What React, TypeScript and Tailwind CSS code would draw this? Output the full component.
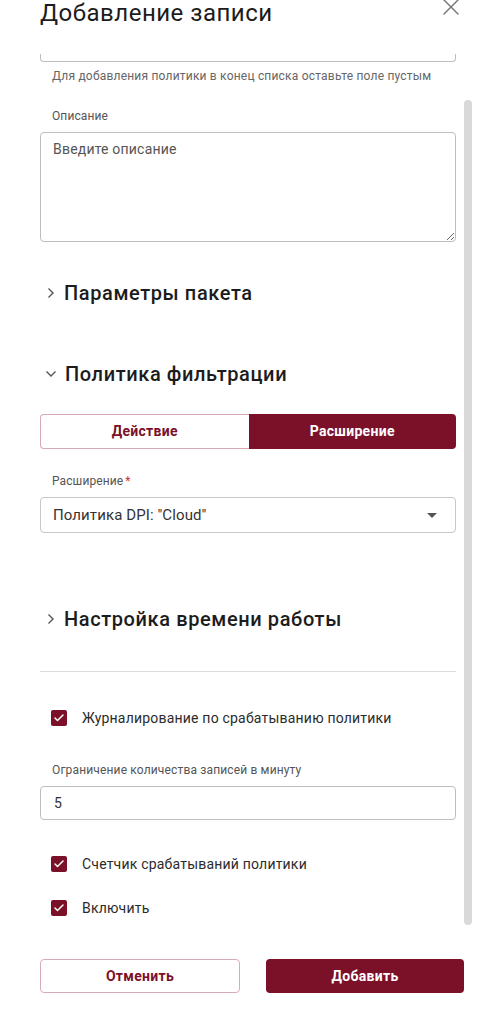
import { Check, X } from 'lucide-react';

const maroon = 'bg-[#7a1129]';

function Chevron({ open }: { open?: boolean }) {
  return open ? (
    <svg width="12" height="8" viewBox="0 0 12 8" className="ml-[5px] mr-[8px]">
      <polyline points="1.5,1.5 6,6 10.5,1.5" fill="none" stroke="#555" strokeWidth="1.4" />
    </svg>
  ) : (
    <svg width="8" height="12" viewBox="0 0 8 12" className="ml-[7px] mr-[9px]">
      <polyline points="1.5,1.5 6,6 1.5,10.5" fill="none" stroke="#555" strokeWidth="1.4" />
    </svg>
  );
}

function Section({ title, open }: { title: string; open?: boolean }) {
  return (
    <div className="flex h-[28px] items-center">
      <Chevron open={open} />
      <span className="text-[20px] leading-[28px] font-medium tracking-[0.6px] text-[#1c1c1c]">{title}</span>
    </div>
  );
}

function Box({ label }: { label: string }) {
  return (
    <div className="flex h-[20px] items-center">
      <span className={`ml-[11px] flex h-[16px] w-[16px] items-center justify-center rounded-[2px] ${maroon}`}>
        <Check size={12} strokeWidth={3} color="#fff" />
      </span>
      <span className="ml-[15px] text-[14px] leading-[20px] tracking-[0.2px] text-[#2b2b2b]">{label}</span>
    </div>
  );
}

export default function App() {
  return (
    <div className="relative h-[1027px] w-[500px] overflow-hidden bg-white font-['Roboto',sans-serif]">
      <div className="px-[40px]">
        {/* header */}
        <div className="flex h-[54px] items-start justify-between">
          <h1 className="mt-[1px] text-[24px] leading-[24px] font-normal tracking-[0.5px] text-[#1c1c1c]">Добавление записи</h1>
          <X size={28} strokeWidth={1.2} color="#777" className="-mt-[7px] mr-[-5px]" />
        </div>

        {/* scrolled-off input */}
        <div className="h-[8px] w-[416px] rounded-b-[4px] border-x border-b border-[#bdbdbd]" />
        <div className="mt-[6px] pl-[12px] text-[12px] leading-[16px] tracking-[0.2px] text-[#666]">
          Для добавления политики в конец списка оставьте поле пустым
        </div>

        <div className="mt-[24px] pl-[12px] text-[12px] leading-[16px] tracking-[0.1px] text-[#555]">Описание</div>
        <textarea
          placeholder="Введите описание"
          className="mt-[8px] block h-[110px] w-[416px] rounded-[4px] border border-[#bdbdbd] px-[12px] py-[6px] text-[14px] leading-[20px] tracking-[0.2px] text-[#333] placeholder:text-[#555] outline-none"
        />

        <div className="mt-[37px]"><Section title="Параметры пакета" /></div>
        <div className="mt-[53px]"><Section title="Политика фильтрации" open /></div>

        {/* action/extension toggle */}
        <div className="mt-[26px] flex h-[35px] w-[416px]">
          <div className="flex flex-1 items-center justify-center rounded-l-[4px] border border-r-0 border-[#d7abb4] text-[14px] font-bold tracking-[0.3px] text-[#7a1129]">
            Действие
          </div>
          <div className={`flex flex-1 items-center justify-center rounded-r-[4px] ${maroon} text-[14px] font-bold tracking-[0.3px] text-white`}>
            Расширение
          </div>
        </div>

        <div className="mt-[24px] pl-[12px] text-[12px] leading-[16px] tracking-[0.1px] text-[#555]">
          Расширение<span className="ml-[2px] text-[#d32f2f]">*</span>
        </div>
        <div className="mt-[8px] flex h-[36px] w-[416px] items-center justify-between rounded-[4px] border border-[#c8c8c8] pl-[12px] pr-[18px]">
          <span className="text-[15px] tracking-[0.1px] text-[#333]">Политика DPI: "Cloud"</span>
          <svg width="10" height="5" viewBox="0 0 10 5"><polygon points="0,0 10,0 5,5" fill="#555" /></svg>
        </div>

        <div className="mt-[72px]"><Section title="Настройка времени работы" /></div>
        <div className="mt-[38px] h-px w-[416px] bg-[#dcdcdc]" />

        <div className="mt-[36px]"><Box label="Журналирование по срабатыванию политики" /></div>

        <div className="mt-[34px] pl-[12px] text-[12px] leading-[16px] tracking-[0.15px] text-[#555]">Ограничение количества записей в минуту</div>
        <div className="mt-[8px] flex h-[34px] w-[416px] items-center rounded-[4px] border border-[#bdbdbd] px-[13px] text-[14px] text-[#333]">
          5
        </div>

        <div className="mt-[34px]"><Box label="Счетчик срабатываний политики" /></div>
        <div className="mt-[24px]"><Box label="Включить" /></div>

        {/* footer */}
        <div className="mt-[41px] flex w-[424px] gap-[26px]">
          <button className="h-[34px] flex-1 rounded-[4px] border border-[#d7abb4] text-[14px] font-bold tracking-[0.3px] text-[#7a1129]">
            Отменить
          </button>
          <button className={`h-[34px] flex-1 rounded-[4px] ${maroon} text-[14px] font-bold tracking-[0.3px] text-white`}>
            Добавить
          </button>
        </div>
      </div>

      {/* scrollbar thumb */}
      <div className="absolute left-[464px] top-[100px] h-[825px] w-[8px] rounded-full bg-[#d9d9d9]" />
    </div>
  );
}
